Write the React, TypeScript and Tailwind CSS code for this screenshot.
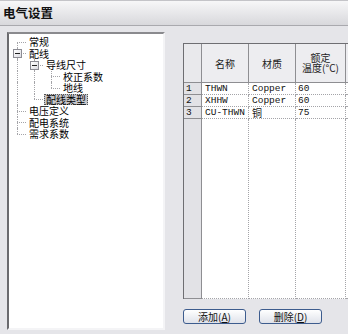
import React from "react";

interface TreeNode {
  label: string;
  guides: boolean[];
  line: "down" | "full" | "up";
  expander?: boolean;
  selected?: boolean;
}

const tree: TreeNode[] = [
  { label: "常规", guides: [], line: "down" },
  { label: "配线", guides: [], line: "full", expander: true },
  { label: "导线尺寸", guides: [true], line: "full", expander: true },
  { label: "校正系数", guides: [true, true], line: "full" },
  { label: "地线", guides: [true, true], line: "up" },
  { label: "配线类型", guides: [true], line: "up", selected: true },
  { label: "电压定义", guides: [], line: "full" },
  { label: "配电系统", guides: [], line: "full" },
  { label: "需求系数", guides: [], line: "up" },
];

const rows = [
  { n: "1", name: "THWN", mat: "Copper", temp: "60" },
  { n: "2", name: "XHHW", mat: "Copper", temp: "60" },
  { n: "3", name: "CU-THWN", mat: "铜", temp: "75" },
];

const cjk = { fontFamily: '"Noto Sans CJK SC", sans-serif' };
const mono = { fontFamily: '"Liberation Mono", "Noto Sans CJK SC", monospace' };

const dot = "border-dotted border-[#a4a4a8]";

const TreeRow: React.FC<{ node: TreeNode }> = ({ node }) => (
  <div className="flex h-[11.5px] items-center">
    {node.guides.map((g, i) => (
      <div key={i} className="relative h-full w-[17px] shrink-0">
        {g && <div className={`absolute left-[8px] top-0 bottom-0 border-l ${dot}`} />}
      </div>
    ))}
    <div className="relative h-full w-[17px] shrink-0">
      {node.line === "full" && <div className={`absolute left-[8px] top-0 bottom-0 border-l ${dot}`} />}
      {node.line === "down" && <div className={`absolute left-[8px] top-1/2 bottom-0 border-l ${dot}`} />}
      {node.line === "up" && <div className={`absolute left-[8px] top-0 h-1/2 border-l ${dot}`} />}
      <div className={`absolute left-[8px] right-0 top-1/2 border-t ${dot}`} />
      {node.expander && (
        <div className="absolute left-[4px] top-[calc(50%-4px)] flex h-[9px] w-[9px] items-center justify-center border border-[#8c8c94] bg-gradient-to-br from-white to-[#dcdce2]">
          <div className="h-px w-[5px] bg-[#222]" />
        </div>
      )}
    </div>
    <span
      className={`ml-[1px] h-[11px] px-[1px] text-[10px] leading-[9px] text-black ${
        node.selected ? "border border-dotted border-[#555] bg-[#c6c6ca]" : "border border-transparent"
      }`}
    >
      {node.label}
    </span>
  </div>
);

const cols = ["w-[47px]", "w-[47px]", "w-[50px]", "w-[60px]"];

export default function App() {
  return (
    <div className="flex h-[334px] w-[348px] flex-col overflow-hidden bg-[#e5e5e9]" style={cjk}>
      {/* Title */}
      <div className="flex h-[26px] shrink-0 items-center border-t border-b border-t-[#c4c4c8] border-b-[#a9a9ae] bg-gradient-to-b from-[#f7f7f8] to-[#d8d8dc] pl-[3px]">
        <span className="text-[12.5px] font-bold text-[#111]">电气设置</span>
      </div>

      <div className="flex min-h-0 flex-1 pl-[7px] pt-[6px]">
        {/* Tree panel */}
        <div className="h-[298px] w-[158px] shrink-0 border-2 border-t-[#8a8a8e] border-l-[#6a6a6e] border-r-[#f4f4f6] border-b-[#f4f4f6] bg-white pt-[2px]">
          {tree.map((n) => (
            <TreeRow key={n.label} node={n} />
          ))}
        </div>

        {/* Grid + buttons */}
        <div className="ml-[18px] flex min-w-0 flex-1 flex-col overflow-hidden pt-[11px]">
          <div className="flex h-[256px] w-[223px] flex-col border-l border-t border-[#6e6e72] bg-white">
            <div className="flex h-[39px] shrink-0">
              <div className="w-[18px] shrink-0 border-r border-b border-[#8e8e92] bg-[#e9e9ec]" />
              {["名称", "材质"].map((h, i) => (
                <div
                  key={h}
                  className={`${cols[i]} flex shrink-0 items-center justify-center border-r border-b border-[#8e8e92] bg-[#ededf0] text-[10px] text-[#222]`}
                >
                  {h}
                </div>
              ))}
              <div className={`${cols[2]} flex shrink-0 flex-col items-center justify-center border-r border-b border-[#8e8e92] bg-[#ededf0] text-[10px] leading-[10px] text-[#222]`}>
                <span>额定</span>
                <span className="whitespace-nowrap">温度(°C)</span>
              </div>
              <div className={`${cols[3]} shrink-0 border-b border-[#8e8e92] bg-[#ededf0]`} />
            </div>

            {rows.map((r) => (
              <div key={r.n} className="flex h-[12px] shrink-0 text-[9.5px] leading-[11px] text-[#111]" style={mono}>
                <div className="w-[18px] shrink-0 border-r border-b border-[#8e8e92] bg-[#e2e2e6] pl-[2px]">{r.n}</div>
                <div className={`${cols[0]} shrink-0 border-r border-b ${dot} pl-[3px]`}>{r.name}</div>
                <div className={`${cols[1]} shrink-0 border-r border-b ${dot} pl-[3px]`}>
                  {r.mat === "铜" ? <span className="text-[10px]" style={cjk}>{r.mat}</span> : r.mat}
                </div>
                <div className={`${cols[2]} shrink-0 border-r border-b ${dot} pl-[2px]`}>{r.temp}</div>
                <div className={`${cols[3]} shrink-0 border-b ${dot}`} />
              </div>
            ))}

            <div className="flex min-h-0 flex-1">
              <div className="w-[18px] shrink-0 border-r border-b border-[#8e8e92] bg-[#e2e2e6]" />
              <div className={`${cols[0]} shrink-0 border-r border-b ${dot}`} />
              <div className={`${cols[1]} shrink-0 border-r border-b ${dot}`} />
              <div className={`${cols[2]} shrink-0 border-r border-b ${dot}`} />
              <div className={`${cols[3]} shrink-0 border-b ${dot}`} />
            </div>
          </div>

          <div className="mt-[10px] flex gap-[13px]">
            <button className="flex h-[15px] w-[63px] items-center justify-center rounded-[3px] border border-[#3d5c8e] bg-gradient-to-b from-white to-[#dfe2ea] text-[10px] leading-[10px] text-[#111]">
              添加(<span className="underline">A</span>)
            </button>
            <button className="flex h-[15px] w-[63px] items-center justify-center rounded-[3px] border border-[#3d5c8e] bg-gradient-to-b from-white to-[#dfe2ea] text-[10px] leading-[10px] text-[#111]">
              删除(<span className="underline">D</span>)
            </button>
          </div>
        </div>
      </div>
    </div>
  );
}
